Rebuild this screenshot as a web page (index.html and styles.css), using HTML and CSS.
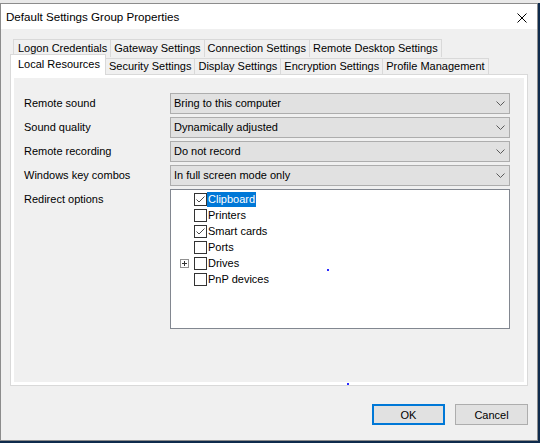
FILE: index.html
```html
<!DOCTYPE html>
<html>
<head>
<meta charset="utf-8">
<title>Default Settings Group Properties</title>
<link rel="stylesheet" href="styles.css">
</head>
<body>
<div class="behind"></div>
<div class="window">
  <div class="titlebar">
    <span class="title">Default Settings Group Properties</span>
    <svg class="close" width="10" height="10" viewBox="0 0 10 10"><path d="M0.5 0.5L9.5 9.5M9.5 0.5L0.5 9.5" stroke="#000" stroke-width="1" fill="none"/></svg>
  </div>
  <div class="client">
    <div class="tabs">
      <div class="tabrow row1">
        <div class="tab">Logon Credentials</div>
        <div class="tab">Gateway Settings</div>
        <div class="tab">Connection Settings</div>
        <div class="tab">Remote Desktop Settings</div>
      </div>
      <div class="tabrow row2">
        <div class="tab selected">Local Resources</div>
        <div class="tab">Security Settings</div>
        <div class="tab">Display Settings</div>
        <div class="tab">Encryption Settings</div>
        <div class="tab">Profile Management</div>
      </div>
    </div>
    <div class="panel">
      <div class="form">
        <div class="label">Remote sound</div>
        <div class="combo"><span>Bring to this computer</span><svg class="chev" width="9" height="5" viewBox="0 0 9 5"><path d="M0.5 0.5L4.5 4.5L8.5 0.5" stroke="#5a5a5a" fill="none"/></svg></div>
        <div class="label">Sound quality</div>
        <div class="combo"><span>Dynamically adjusted</span><svg class="chev" width="9" height="5" viewBox="0 0 9 5"><path d="M0.5 0.5L4.5 4.5L8.5 0.5" stroke="#5a5a5a" fill="none"/></svg></div>
        <div class="label">Remote recording</div>
        <div class="combo"><span>Do not record</span><svg class="chev" width="9" height="5" viewBox="0 0 9 5"><path d="M0.5 0.5L4.5 4.5L8.5 0.5" stroke="#5a5a5a" fill="none"/></svg></div>
        <div class="label">Windows key combos</div>
        <div class="combo"><span>In full screen mode only</span><svg class="chev" width="9" height="5" viewBox="0 0 9 5"><path d="M0.5 0.5L4.5 4.5L8.5 0.5" stroke="#5a5a5a" fill="none"/></svg></div>
        <div class="label top">Redirect options</div>
        <div class="listbox">
          <div class="item"><span class="exp none"></span><span class="cb"><svg width="11" height="11" viewBox="0 0 11 11"><path d="M1.5 5.5L4 8L9.5 2.5" stroke="#4a4a4a" fill="none"/></svg></span><span class="txt sel">Clipboard</span></div>
          <div class="item"><span class="exp none"></span><span class="cb"></span><span class="txt">Printers</span></div>
          <div class="item"><span class="exp none"></span><span class="cb"><svg width="11" height="11" viewBox="0 0 11 11"><path d="M1.5 5.5L4 8L9.5 2.5" stroke="#4a4a4a" fill="none"/></svg></span><span class="txt">Smart cards</span></div>
          <div class="item"><span class="exp none"></span><span class="cb"></span><span class="txt">Ports</span></div>
          <div class="item"><span class="exp"><svg width="9" height="9" viewBox="0 0 9 9"><path d="M2 4.5H7M4.5 2V7" stroke="#333" fill="none"/></svg></span><span class="cb"></span><span class="txt">Drives</span></div>
          <div class="item"><span class="exp none"></span><span class="cb"></span><span class="txt">PnP devices</span></div>
        </div>
      </div>
    </div>
    <div class="buttons">
      <button class="btn default">OK</button>
      <button class="btn">Cancel</button>
    </div>
  </div>
</div>
<span class="dot dot1"></span>
<span class="dot dot2"></span>
</body>
</html>
```

FILE: styles.css
```css
html, body {
  margin: 0;
  padding: 0;
}
body {
  width: 540px;
  height: 443px;
  overflow: hidden;
  position: relative;
  background: #0e2a4c;
  font-family: "Liberation Sans", Arial, sans-serif;
  font-size: 11px;
  color: #000;
}
.behind {
  height: 3px;
  background: #e9e9e9;
}
.window {
  width: 536px;
  height: 436px;
  border: 1px solid #8c8c8c;
  background: #f0f0f0;
}
.titlebar {
  height: 25px;
  background: #fff;
  display: flex;
  align-items: center;
  padding-left: 5px;
}
.title {
  font-size: 11.6px;
  line-height: 14px;
  margin-top: 1px;
}
.close {
  margin-left: auto;
  margin-right: 10px;
  margin-top: 3px;
}
.client {
  padding: 10px 9px 0 9px;
}
.tabs {
  width: 518px;
  height: 35px;
}
.tabrow {
  display: flex;
}
.row1 {
  height: 18px;
  padding-left: 3px;
}
.row2 {
  height: 17px;
  padding-left: 2px;
  align-items: flex-end;
}
.tab {
  box-sizing: border-box;
  border: 1px solid #d9d9d9;
  border-bottom: none;
  background: #f0f0f0;
  padding: 0 3px;
  margin-right: -1px;
  white-space: nowrap;
}
.row1 .tab {
  height: 18px;
  line-height: 17px;
}
.row1 .tab:first-child {
  padding-left: 4px;
}
.row2 .tab {
  height: 16px;
  line-height: 15px;
}
.row2 .tab.selected {
  position: relative;
  z-index: 2;
  height: 21px;
  line-height: 19px;
  margin: 0 -1px -1px -2px;
  padding: 0 5px 0 7px;
  background: #fff;
}
.panel {
  box-sizing: border-box;
  width: 518px;
  height: 312px;
  border: 1px solid #d9d9d9;
  background: #f0f0f0;
  box-shadow: inset 0 0 0 3px #fff;
  padding: 18px 0 0 13px;
}
.form {
  display: grid;
  grid-template-columns: 146px 340px;
  row-gap: 3px;
}
.label {
  line-height: 21px;
  white-space: nowrap;
}
.combo {
  box-sizing: border-box;
  height: 21px;
  border: 1px solid #adadad;
  background: #e1e1e1;
  padding: 0 4px 0 3px;
  display: flex;
  align-items: center;
  line-height: 19px;
}
.chev {
  margin-left: auto;
}
.listbox {
  box-sizing: border-box;
  height: 140px;
  border: 1px solid #828790;
  background: #fff;
  padding-top: 1px;
}
.item {
  height: 16px;
  display: flex;
  align-items: center;
  padding-left: 9px;
}
.exp {
  box-sizing: border-box;
  width: 9px;
  height: 9px;
  border: 1px solid #919191;
  margin-right: 5px;
  display: flex;
}
.exp svg {
  margin: -1px;
}
.exp.none {
  visibility: hidden;
}
.cb {
  box-sizing: border-box;
  width: 13px;
  height: 13px;
  border: 1px solid #333;
  background: #fff;
  display: flex;
}
.txt {
  padding: 0 1px;
  line-height: 15px;
  white-space: nowrap;
}
.txt.sel {
  background: #0078d7;
  color: #fff;
}
.buttons {
  display: flex;
  justify-content: flex-end;
  gap: 10px;
  margin-top: 18px;
}
.btn {
  box-sizing: border-box;
  width: 73px;
  height: 21px;
  border: 1px solid #adadad;
  background: #e1e1e1;
  font-family: "Liberation Sans", Arial, sans-serif;
  font-size: 11px;
  color: #000;
  padding: 0;
  margin: 0;
}
.btn.default {
  border: 2px solid #0078d7;
}
.dot {
  position: absolute;
  width: 2px;
  height: 2px;
  background: #2a2aff;
}
.dot1 {
  left: 327px;
  top: 269px;
}
.dot2 {
  left: 347px;
  top: 383px;
}
```
